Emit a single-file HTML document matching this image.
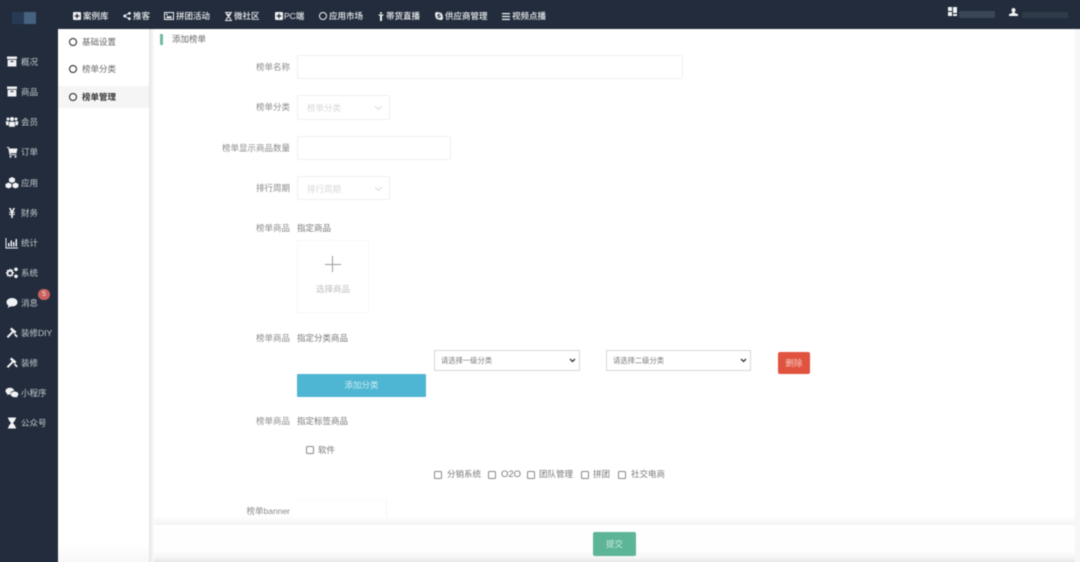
<!DOCTYPE html>
<html lang="zh"><head><meta charset="utf-8"><title>添加榜单</title>
<style>
*{box-sizing:border-box}
html,body{margin:0;padding:0;width:1080px;height:562px;overflow:hidden}
body{background:#fff;position:relative;font-family:"Liberation Sans","Noto Sans CJK SC",sans-serif;font-size:8.5px;color:#777}
#c{position:absolute;left:0;top:0;width:1080px;height:562px;overflow:hidden;contain:paint}
#w{position:absolute;left:0;top:0;width:1080px;height:562px;filter:blur(.45px)}
.a{position:absolute;white-space:nowrap;line-height:12px}
.top{position:absolute;left:-10px;top:-10px;width:1100px;height:39px;background:#222c3c}
.side{position:absolute;left:-10px;top:-10px;width:68px;height:582px;background:#222c3c}
.t{position:absolute;top:10px;color:#eef0f2;font-size:8.5px;line-height:12px;white-space:nowrap;font-weight:500}
.t svg,.s svg{position:absolute;fill:#f2f3f5}
.s{position:absolute;left:0;width:58px;height:14px;color:#c6cad0;font-size:8.5px;line-height:14px;white-space:nowrap}
.s span{position:absolute;left:21px;top:0}
.s svg{left:5px;top:0;width:14px;height:14px}
.sub{position:absolute;left:58px;top:29px;width:91px;height:543px;background:linear-gradient(180deg,#fff 0,#fff 95%,#f3f3f3 100%)}
.subi{position:absolute;left:82px;font-size:8.5px;line-height:12px;color:#666}
.dot{position:absolute;left:69px;width:8px;height:8px;border:1.4px solid #222;border-radius:50%}
.shadow{position:absolute;left:149px;top:29px;width:5px;height:543px;background:linear-gradient(90deg,#e4e4e6,#fbfbfb)}
.lab{position:absolute;right:790px;font-size:8.5px;line-height:12px;color:#8a8a8a;white-space:nowrap}
.inp{position:absolute;background:#fff;border:1px solid #efefef;border-radius:2px}
.ph{position:absolute;left:9px;top:6px;font-size:8.5px;line-height:12px;color:#d8d8d8}
.sel{position:absolute;height:21px;background:#fff;border:1px solid #d8d8d8;font-size:7.3px;line-height:19px;color:#777;padding-left:6px}
.cb{position:absolute;width:8px;height:8px;border:1px solid #888;border-radius:1.5px;background:#fff}
.tx{position:absolute;font-size:8.5px;line-height:12px;color:#777;white-space:nowrap}
</style></head><body><div id="c"><div id="w">
<div class="top"></div>
<div class="side"></div>
<div class="a" style="left:12px;top:12px;width:12px;height:12px;background:#263a54"></div>
<div class="a" style="left:24px;top:12px;width:12px;height:12px;background:#46627f"></div>

<div class="t" style="left:83px"><svg style="left:-10px;top:2px" width="8" height="8" viewBox="0 0 8 8"><path d="M1 0h6a1 1 0 0 1 1 1v6a1 1 0 0 1-1 1H1a1 1 0 0 1-1-1V1a1 1 0 0 1 1-1zM3.4 1.6v1.8H1.6v1.2h1.8v1.8h1.2V4.600h1.800V3.400H4.600V1.600z" fill-rule="evenodd"/></svg>案例库</div>
<div class="t" style="left:133px"><svg style="left:-10px;top:2px" width="8" height="8" viewBox="0 0 8 8"><path d="M6.500 0a1.400 1.400 0 1 1-1.100 2.300L3 3.500v1l2.400 1.200a1.400 1.400 0 1 1-.4.800L2.500 5.300a1.500 1.500 0 1 1 0-2.600L5 1.500A1.400 1.400 0 0 1 6.500 0z"/></svg>推客</div>
<div class="t" style="left:176px"><svg style="left:-12px;top:2px" width="10" height="8" viewBox="0 0 10 8"><path d="M0 0h10v8H0zM1 1v6h8V1zM1.800 6.200l2-2.600 1.400 1.400 1.200-1.600 1.800 2.800zM2.800 3.400a.9.900 0 1 0 0-1.800.9.900 0 0 0 0 1.800z" fill-rule="evenodd"/></svg>拼团活动</div>
<div class="t" style="left:234px"><svg style="left:-9px;top:2px" width="7" height="9" viewBox="0 0 7 9"><path d="M0 0h7v1H6v1.500L4 4.500l2 2V8h1v1H0V8h1V6.500l2-2-2-2V1H0zM2 1v1h3V1zM1.800 7v1h3.400V7L3.500 5.500z" fill-rule="evenodd"/></svg>微社区</div>
<div class="t" style="left:284px"><svg style="left:-9px;top:2px" width="8" height="8" viewBox="0 0 8 8"><path d="M1 0h6a1 1 0 0 1 1 1v6a1 1 0 0 1-1 1H1a1 1 0 0 1-1-1V1a1 1 0 0 1 1-1zM3.400 1.600v1.800H1.600v1.200h1.800v1.800h1.200V4.600h1.800V3.400H4.600V1.600z" fill-rule="evenodd"/></svg>PC端</div>
<div class="t" style="left:329px"><svg style="left:-10px;top:2px" width="8" height="8" viewBox="0 0 8 8"><path d="M4 0a4 4 0 1 1 0 8 4 4 0 0 1 0-8zm0 1a3 3 0 1 0 0 6 3 3 0 0 0 0-6z" fill-rule="evenodd"/></svg>应用市场</div>
<div class="t" style="left:386px"><svg style="left:-8px;top:2px" width="6" height="9" viewBox="0 0 6 9"><path d="M3 0a1 1 0 1 1 0 2 1 1 0 0 1 0-2zM.5 2.500h5v1L4 3.800V9H2V3.800L.5 3.500z"/></svg>帯货直播</div>
<div class="t" style="left:445px"><svg style="left:-10px;top:2px" width="8" height="8" viewBox="0 0 8 8"><path d="M2 0c.8 0 1.100.4 2 .4C6.200.4 7.600 1.800 7.600 4c0 .8.400 1.200.4 2 0 1.100-.9 2-2 2-.8 0-1.200-.4-2-.4C1.800 7.600.4 6.200.4 4 .4 3.200 0 2.800 0 2 0 .9.900 0 2 0zm2.100 1.700c-1 0-1.900.5-1.900 1.400 0 1.500 2.500 1.200 2.500 1.900 0 .5-1.500.6-2-.3l-.7.500c.7 1.300 3.800 1.200 3.800-.3 0-1.600-2.500-1.200-2.500-1.900 0-.5 1.300-.5 1.700.2l.7-.5c-.4-.6-1-1-1.600-1z" fill-rule="evenodd"/></svg>供应商管理</div>
<div class="t" style="left:512px"><svg style="left:-10px;top:3px" width="8" height="7" viewBox="0 0 8 7"><path d="M0 0h8v1.200H0zM0 2.900h8v1.200H0zM0 5.800h8V7H0z"/></svg>视频点播</div>

<svg class="a" style="left:948px;top:7px" width="10" height="10" viewBox="0 0 10 10" fill="#f2f3f5"><path d="M0 0h4v4H0zM5 0h4v6H5zM0 5h4v4H0zM5 7h4v2H5z"/></svg>
<div class="a" style="left:959px;top:11px;width:36px;height:7px;background:#3a4655;border-radius:1px"></div>
<svg class="a" style="left:1009px;top:8px" width="9" height="8" viewBox="0 0 9 8" fill="#f2f3f5"><path d="M4.500 0a2 2 0 0 1 2 2.300c0 .8-.5 1.500-1 1.900v.5L9 6.200V8H0V6.200l3.500-1.500v-.5c-.5-.4-1-1.100-1-1.900a2 2 0 0 1 2-2.300z"/></svg>
<div class="a" style="left:1022px;top:12px;width:46px;height:6px;background:#303b49;border-radius:1px"></div>

<div class="s" style="top:55px"><svg viewBox="0 0 14 14"><path d="M2 1.500h10v2.500H2zM2.600 4.800h8.800V11.500H2.600zM5.500 6v1h3V6z" fill-rule="evenodd"/></svg><span>概况</span></div>
<div class="s" style="top:85px"><svg viewBox="0 0 14 14"><path d="M2 1.500h10v2.500H2zM2.600 4.800h8.800V11.500H2.600zM5.500 6v1h3V6z" fill-rule="evenodd"/></svg><span>商品</span></div>
<div class="s" style="top:115px"><svg viewBox="0 0 14 14"><path d="M3 2.500a1.500 1.500 0 1 1 0 3 1.500 1.500 0 0 1 0-3zM11 2.500a1.500 1.500 0 1 1 0 3 1.500 1.500 0 0 1 0-3zM7 2a2 2 0 1 1 0 4 2 2 0 0 1 0-4zM.7 6.300h3v4H1.200zM10.300 6.300h3l-.5 4h-2.500zM4.400 6.800h5.200l.4 5H4z"/></svg><span>会员</span></div>
<div class="s" style="top:145px"><svg viewBox="0 0 14 14"><path d="M2 2h2l.3 1.500H12.500l-1 4.700H5.300l.2 1h6v1H4.600L3.200 3H2zM5.500 10.800a1 1 0 1 1 0 2 1 1 0 0 1 0-2zM10.500 10.800a1 1 0 1 1 0 2 1 1 0 0 1 0-2z"/></svg><span>订单</span></div>
<div class="s" style="top:176px"><svg viewBox="0 0 14 14"><path d="M7 1l3 1.500v3L7 7 4 5.500v-3zM3.500 6.500l3 1.500v3l-3 1.500-3-1.500V8zM10.500 6.500l3 1.500v3l-3 1.500-3-1.500V8z"/></svg><span>应用</span></div>
<div class="s" style="top:206px"><svg viewBox="0 0 14 14"><path d="M4 2h1.800L7 5l1.200-3H10L8.300 6h1.500v1H7.800v1h2v1h-2v3H6.200V9h-2V8h2V7h-2V6h1.500z"/></svg><span>财务</span></div>
<div class="s" style="top:236px"><svg viewBox="0 0 14 14"><path d="M.5 2h1v9.500H13v1H.5zM3 7h1.500v3.500H3zM5.500 4.500H7v6H5.500zM8 6h1.500v4.500H8zM10.500 3H12v7.500h-1.500z"/></svg><span>统计</span></div>
<div class="s" style="top:266px"><svg viewBox="0 0 14 14"><path d="M5.500 3.500l1 .3.800-.5.900.9-.5.800.3 1 1 .2v1.300l-1 .2-.3 1 .5.800-.9.900-.8-.5-1 .3-.2 1H4.500l-.2-1-1-.3-.8.500-.9-.9.500-.8-.3-1-1-.2V6.500l1-.2.300-1-.5-.8.900-.9.800.5 1-.3.200-1h1.300zM5 5.600a1.600 1.600 0 1 0 0 3.200 1.600 1.600 0 0 0 0-3.200zM11 1.500a1.800 1.800 0 1 1 0 3.600 1.800 1.800 0 0 1 0-3.600zM11 8.500a1.800 1.800 0 1 1 0 3.600 1.800 1.800 0 0 1 0-3.600z" fill-rule="evenodd"/></svg><span>系统</span></div>
<div class="s" style="top:296px"><svg viewBox="0 0 14 14"><path d="M7 2c3.300 0 5.500 1.800 5.500 4.200S10.300 10.400 7 10.400c-.5 0-1 0-1.400-.1-.8.800-1.900 1.300-3.200 1.400.6-.7 1-1.400 1.100-2.100C2.300 8.800 1.500 7.600 1.500 6.200 1.500 3.800 3.700 2 7 2z"/></svg><span>消息</span></div>
<div class="a" style="left:38px;top:289px;width:12px;height:11px;background:#c9625f;border-radius:6px;color:#f6dcdc;font-size:7px;line-height:11px;text-align:center">5</div>
<div class="s" style="top:326px"><svg viewBox="0 0 14 14"><path d="M6.500 1.500l5 4.200-1.800 2L8.400 6.600 3.200 12 1.700 10.600 7 5.300 4.900 3.400zM10 7.500l2.800 2.500-1.200 1.500L9 8.800z"/></svg><span>装修DIY</span></div>
<div class="s" style="top:356px"><svg viewBox="0 0 14 14"><path d="M6.500 1.500l5 4.200-1.800 2L8.400 6.600 3.200 12 1.700 10.600 7 5.300 4.900 3.400zM10 7.500l2.800 2.500-1.200 1.500L9 8.800z"/></svg><span>装修</span></div>
<div class="s" style="top:386px"><svg viewBox="0 0 14 14"><path d="M5 1.800c2.300 0 4 1.300 4.200 3-2.200 0-3.800 1.400-3.800 3.100 0 .3 0 .5.100.7H5c-.5 0-1-.1-1.300-.2L2 9.300l.4-1.400C1.200 7.100.5 6 .5 4.900.5 3.200 2.500 1.800 5 1.800zM9.500 5.500c2.200 0 3.900 1.200 3.900 2.800 0 .9-.6 1.700-1.400 2.300l.3 1.100-1.300-.7c-.5.100-1 .2-1.500.2-2.100 0-3.800-1.300-3.800-2.900s1.700-2.800 3.800-2.800z"/></svg><span>小程序</span></div>
<div class="s" style="top:416px"><svg viewBox="0 0 14 14"><path d="M3 1.500h8v1.300h-.7v1.200L8 7l2.300 3v1.200h.7v1.300H3v-1.300h.7V10L6 7 3.700 4V2.800H3z"/></svg><span>公众号</span></div>

<div class="sub"></div>
<div class="a" style="left:58px;top:86px;width:91px;height:22px;background:#f5f5f6"></div>
<div class="dot" style="top:38px"></div><div class="subi" style="top:36px">基础设置</div>
<div class="dot" style="top:65px"></div><div class="subi" style="top:63px">榜单分类</div>
<div class="dot" style="top:93px"></div><div class="subi" style="top:91px;color:#333;font-weight:600">榜单管理</div>
<div class="shadow"></div>

<div class="a" style="left:160px;top:34px;width:3px;height:11px;background:#6fbba2"></div>
<div class="a" style="left:172px;top:33px;color:#666">添加榜单</div>

<div class="lab" style="top:61px">榜单名称</div>
<div class="inp" style="left:297px;top:55px;width:386px;height:24px"></div>
<div class="lab" style="top:101px">榜单分类</div>
<div class="inp" style="left:297px;top:95px;width:93px;height:25px"><div class="ph">榜单分类</div><svg style="position:absolute;left:76px;top:9px" width="9" height="6" viewBox="0 0 9 6"><path d="M1 1l3.500 3.500L8 1" fill="none" stroke="#ddd"/></svg></div>
<div class="lab" style="top:142px">榜单显示商品数量</div>
<div class="inp" style="left:297px;top:136px;width:154px;height:24px"></div>
<div class="lab" style="top:182px">排行周期</div>
<div class="inp" style="left:297px;top:176px;width:93px;height:24px"><div class="ph">排行周期</div><svg style="position:absolute;left:76px;top:9px" width="9" height="6" viewBox="0 0 9 6"><path d="M1 1l3.500 3.500L8 1" fill="none" stroke="#ddd"/></svg></div>

<div class="lab" style="top:222px">榜单商品</div>
<div class="tx" style="left:297px;top:222px">指定商品</div>
<div class="a" style="left:297px;top:240px;width:72px;height:73px;border:1px dotted #eeeeee"></div>
<div class="a" style="left:325px;top:264px;width:16px;height:1px;background:#9a9a9a"></div>
<div class="a" style="left:332px;top:256px;width:1px;height:16px;background:#9a9a9a"></div>
<div class="tx" style="left:316px;top:283px;color:#bdbdbd">选择商品</div>

<div class="lab" style="top:332px">榜单商品</div>
<div class="tx" style="left:297px;top:332px">指定分类商品</div>
<div class="sel" style="left:434px;top:350px;width:146px">请选择一级分类<svg style="position:absolute;right:3px;top:7px" width="7" height="5" viewBox="0 0 7 5"><path d="M1 1l2.500 2.500L6 1" fill="none" stroke="#333" stroke-width="1.300"/></svg></div>
<div class="sel" style="left:606px;top:350px;width:145px">请选择二级分类<svg style="position:absolute;right:3px;top:7px" width="7" height="5" viewBox="0 0 7 5"><path d="M1 1l2.500 2.500L6 1" fill="none" stroke="#333" stroke-width="1.300"/></svg></div>
<div class="a" style="left:778px;top:352px;width:32px;height:22px;background:#e0533f;border-radius:2px;color:#f7c9c2;line-height:22px;text-align:center">删除</div>
<div class="a" style="left:297px;top:374px;width:129px;height:23px;background:#4eb5d2;border-radius:1px;color:#cfeef5;line-height:23px;text-align:center">添加分类</div>

<div class="lab" style="top:415px">榜单商品</div>
<div class="tx" style="left:297px;top:415px">指定标签商品</div>
<div class="cb" style="left:306px;top:446px"></div><div class="tx" style="left:318px;top:444px">软件</div>
<div class="cb" style="left:434px;top:471px"></div><div class="tx" style="left:447px;top:468px">分销系统</div>
<div class="cb" style="left:488px;top:471px"></div><div class="tx" style="left:501px;top:469px;font-size:9.5px">O2O</div>
<div class="cb" style="left:527px;top:471px"></div><div class="tx" style="left:539px;top:468px">团队管理</div>
<div class="cb" style="left:581px;top:471px"></div><div class="tx" style="left:593px;top:468px">拼团</div>
<div class="cb" style="left:618px;top:471px"></div><div class="tx" style="left:631px;top:468px">社交电商</div>

<div class="lab" style="top:505px">榜单banner</div>
<div class="a" style="left:297px;top:499px;width:90px;height:28px;border-right:1px solid #f5f5f5;border-top:1px solid #fafafa"></div>

<div class="a" style="left:154px;top:516px;width:922px;height:9px;background:linear-gradient(180deg,#fff,#f4f3f4)"></div>
<div class="a" style="left:154px;top:525px;width:922px;height:37px;background:linear-gradient(180deg,#fff 0,#fefefe 70%,#f4f4f4 90%,#e6e6e6 100%)"></div>
<div class="a" style="left:154px;top:562px;width:922px;height:10px;background:#e6e6e6"></div>
<div class="a" style="left:1075px;top:29px;width:15px;height:543px;background:#f7f6f8"></div>
<div class="a" style="left:593px;top:532px;width:43px;height:24px;background:#5cb597;border-radius:2px;color:#cdeadf;line-height:24px;text-align:center">提交</div>
</div></div></body></html>
